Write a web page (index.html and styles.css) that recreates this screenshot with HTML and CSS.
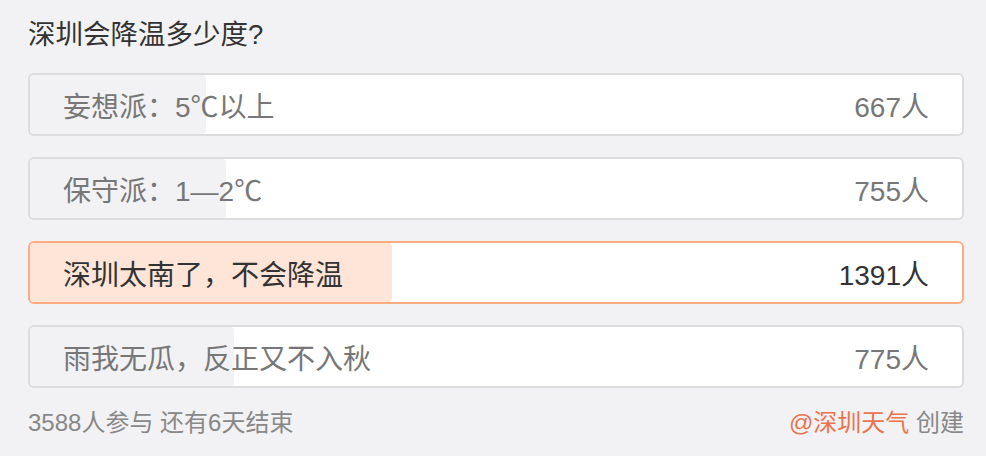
FILE: index.html
```html
<!DOCTYPE html>
<html lang="zh-CN">
<head>
    <meta charset="UTF-8">
    <meta name="viewport" content="width=device-width, initial-scale=1.0">
    <title>投票</title>
    <link rel="stylesheet" href="styles.css">
</head>
<body>
    <div class="poll">
        <h2 class="poll-title">深圳会降温多少度?</h2>
        <ul class="options">
            <li class="option">
                <div class="fill" style="width: 18.9%"></div>
                <div class="row"><span>妄想派：5℃以上</span><span>667人</span></div>
            </li>
            <li class="option">
                <div class="fill" style="width: 21%"></div>
                <div class="row"><span>保守派：1—2℃</span><span>755人</span></div>
            </li>
            <li class="option selected">
                <div class="fill" style="width: 38.8%"></div>
                <div class="row"><span>深圳太南了，不会降温</span><span>1391人</span></div>
            </li>
            <li class="option">
                <div class="fill" style="width: 21.9%"></div>
                <div class="row"><span>雨我无瓜，反正又不入秋</span><span>775人</span></div>
            </li>
        </ul>
        <div class="poll-footer">
            <span>3588人参与 还有6天结束</span>
            <span><a href="#" class="author">@深圳天气</a> 创建</span>
        </div>
    </div>
</body>
</html>
```

FILE: styles.css
```css
body {
    font-family: "Liberation Sans", "Noto Sans CJK SC", sans-serif;
    background-color: #f2f2f4;
    margin: 0;
}

.poll {
    padding: 17px 22px 0 28px;
}

.poll-title {
    font-size: 27.5px;
    font-weight: normal;
    line-height: 36px;
    color: #333;
    margin: 0 0 20px;
}

.options {
    list-style: none;
    margin: 0;
    padding: 0;
    display: flex;
    flex-direction: column;
    gap: 21px;
}

.option {
    display: grid;
    height: 59px;
    background-color: #fff;
    border: 2px solid #dcdcdc;
    border-radius: 6px;
    font-size: 28px;
    color: #777;
}

.fill,
.row {
    grid-area: 1 / 1;
}

.fill {
    background-color: #f2f2f4;
    border-radius: 4px;
}

.row {
    display: flex;
    justify-content: space-between;
    align-items: center;
    padding: 0 33px;
}

.option.selected {
    border-color: #fdab80;
    color: #333;
}

.option.selected .fill {
    background-color: #ffe5d7;
}

.poll-footer {
    display: flex;
    justify-content: space-between;
    margin-top: 17px;
    font-size: 24px;
    line-height: 36px;
    color: #888;
}

.author {
    color: #eb7350;
    text-decoration: none;
}
```
